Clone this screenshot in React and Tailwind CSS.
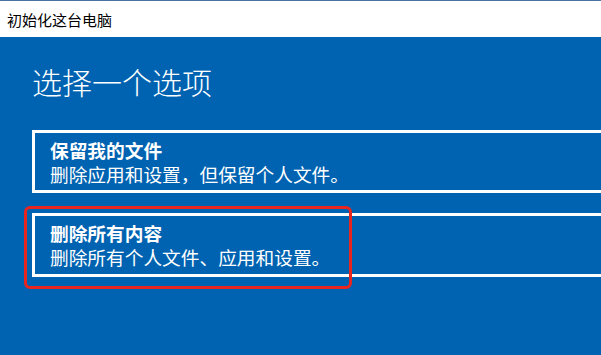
export default function App() {
  return (
    <div className="w-[601px] h-[355px] overflow-hidden flex flex-col bg-[#0063b1] font-['Noto_Sans_CJK_SC',sans-serif]">
      <div className="h-[37px] shrink-0 bg-white border-t border-[#4a72a0] flex items-center pl-[7px]">
        <span className="text-[15px] leading-none text-black font-['Noto_Sans_CJK_SC',sans-serif]">初始化这台电脑</span>
      </div>
      <div className="flex flex-col pl-[32px]">
        <h1 className="mt-[24px] text-[30px] leading-[40px] font-light text-white font-['Noto_Sans_CJK_SC',sans-serif]">选择一个选项</h1>
        <div className="mt-[29px] w-[600px] border-[3px] border-white pl-[15px] pt-[5px] pb-[4px] text-white text-[18.7px] leading-[24px]">
          <div className="font-bold">保留我的文件</div>
          <div>删除应用和设置，但保留个人文件。</div>
        </div>
        <div className="relative mt-[20px] w-[600px] border-[3px] border-white pl-[15px] pt-[5px] pb-[5px] text-white text-[18.7px] leading-[24px]">
          <div className="font-bold">删除所有内容</div>
          <div>删除所有个人文件、应用和设置。</div>
          <div className="absolute left-[-11px] top-[-10px] w-[328px] h-[83px] border-[3px] border-[#e8251f] rounded-[6px]"></div>
        </div>
      </div>
    </div>
  );
}
